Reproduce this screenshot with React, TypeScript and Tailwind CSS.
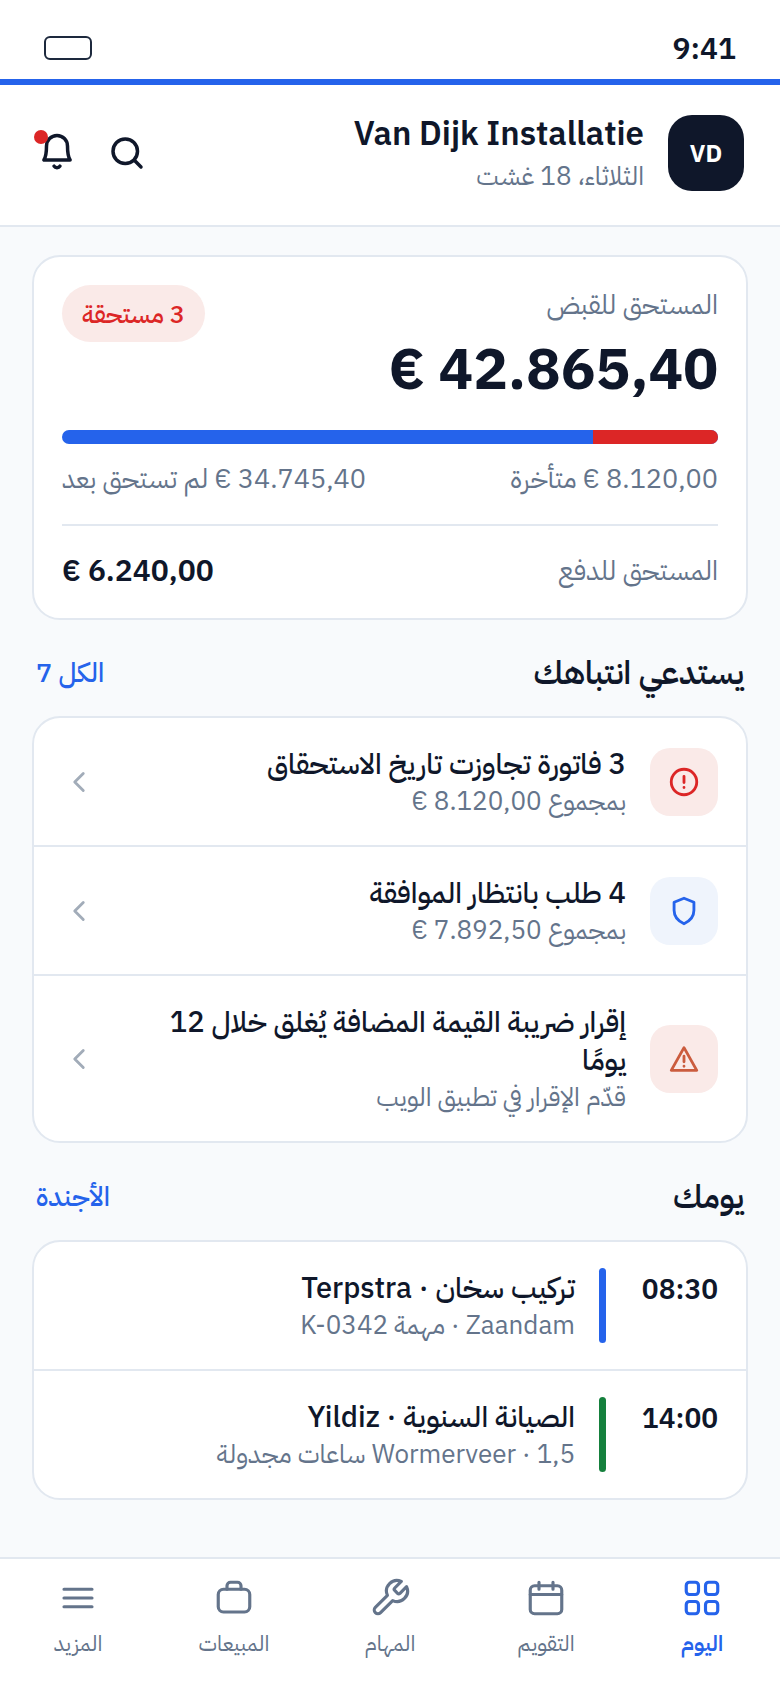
import { type ReactNode } from "react";

type IconProps = { className?: string; width?: number; children: ReactNode };

function Icon({ className = "", width = 2, children }: IconProps) {
    return (
        <svg
            viewBox="0 0 24 24"
            fill="none"
            stroke="currentColor"
            strokeWidth={width}
            strokeLinecap="round"
            strokeLinejoin="round"
            aria-hidden="true"
            className={`shrink-0 ${className}`}
        >
            {children}
        </svg>
    );
}

const alerts = [
    {
        title: "3 فاتورة تجاوزت تاريخ الاستحقاق",
        sub: "بمجموع 8.120,00 €",
        tile: "bg-[#faeae8] text-[#dc2626]",
        icon: (
            <>
                <circle cx="12" cy="12" r="9" />
                <path d="M12 8v4.4M12 15.8v.1" />
            </>
        ),
    },
    {
        title: "4 طلب بانتظار الموافقة",
        sub: "بمجموع 7.892,50 €",
        tile: "bg-[#eff4fc] text-[#2563eb]",
        icon: <path d="M12 3l7 2.8v5.7c0 4.5-2.8 7.6-7 9.5-4.2-1.9-7-5-7-9.5V5.8z" />,
    },
    {
        title: "إقرار ضريبة القيمة المضافة يُغلق خلال 12 يومًا",
        sub: "قدّم الإقرار في تطبيق الويب",
        tile: "bg-[#faeae8] text-[#cb5c3e]",
        icon: (
            <>
                <path d="M12 4l9 16H3z" />
                <path d="M12 10v4M12 17.1v.1" />
            </>
        ),
    },
];

const jobs = [
    {
        time: "08:30",
        title: "تركيب سخان · Terpstra",
        sub: "Zaandam · مهمة K-0342",
        bar: "bg-[#2563eb]",
    },
    {
        time: "14:00",
        title: "الصيانة السنوية · Yildiz",
        sub: "Wormerveer · 1,5 ساعات مجدولة",
        bar: "bg-[#15803d]",
    },
];

const tabs = [
    {
        label: "اليوم",
        active: true,
        icon: (
            <>
                <rect x="3" y="3" width="7" height="7" rx="1.8" />
                <rect x="14" y="3" width="7" height="7" rx="1.8" />
                <rect x="3" y="14" width="7" height="7" rx="1.8" />
                <rect x="14" y="14" width="7" height="7" rx="1.8" />
            </>
        ),
    },
    {
        label: "التقويم",
        icon: (
            <>
                <rect x="3" y="5" width="18" height="16" rx="2.5" />
                <path d="M3 10h18M8 3v4M16 3v4" />
            </>
        ),
    },
    {
        label: "المهام",
        icon: (
            <path d="M14.7 6.3a1 1 0 0 0 0 1.4l1.6 1.6a1 1 0 0 0 1.4 0l3.77-3.77a6 6 0 0 1-7.94 7.94l-6.91 6.91a2.12 2.12 0 0 1-3-3l6.91-6.91a6 6 0 0 1 7.94-7.94l-3.76 3.76z" />
        ),
    },
    {
        label: "المبيعات",
        icon: (
            <>
                <rect x="3" y="7" width="18" height="13" rx="3" />
                <path d="M8 7V5a2 2 0 0 1 2-2h4a2 2 0 0 1 2 2v2" />
            </>
        ),
    },
    {
        label: "المزيد",
        icon: <path d="M4 7h16M4 12h16M4 17h16" />,
    },
];

function SectionHead({ title, link }: { title: string; link: string }) {
    return (
        <div className="flex items-center justify-between px-1">
            <h2 className="text-[32px] leading-10 font-semibold">{title}</h2>
            <a href="#" className="text-[27px] leading-10 font-medium text-[#2563eb]">
                {link}
            </a>
        </div>
    );
}

export default function App() {
    return (
        <div
            dir="rtl"
            lang="ar"
            className="flex min-h-screen flex-col bg-slate-50 font-['IBM_Plex_Sans','IBM_Plex_Sans_Arabic','Noto_Sans',sans-serif] text-[#0f172a]"
        >
            <div className="flex items-center justify-between border-b-6 border-[#2563eb] bg-white px-11 pt-[30px] pb-[13px]">
                <span className="text-[30px] leading-9 font-semibold">9:41</span>
                <span className="h-6 w-12 rounded-md border-2 border-slate-800" />
            </div>

            <header className="flex items-center justify-between border-b-2 border-slate-200 bg-white px-9 pt-7 pb-8">
                <div className="flex items-center gap-6">
                    <span className="flex size-[76px] items-center justify-center rounded-3xl bg-[#0f172a] text-[24px] font-bold text-white">
                        VD
                    </span>
                    <div>
                        <h1 className="text-[33px] leading-10 font-semibold">Van Dijk Installatie</h1>
                        <p className="mt-1 text-[26px] leading-9 text-[#64748b]">الثلاثاء، 18 غشت</p>
                    </div>
                </div>
                <div className="flex gap-7">
                    <button type="button" aria-label="بحث">
                        <Icon className="size-[42px]">
                            <circle cx="11" cy="11" r="7" />
                            <path d="M16.2 16.2L20 20" />
                        </Icon>
                    </button>
                    <button type="button" aria-label="الإشعارات" className="relative">
                        <Icon className="size-[42px]">
                            <path d="M12 2a6 6 0 0 0-6 6c0 5-.5 6.5-1.5 8h15c-1-1.5-1.5-3-1.5-8a6 6 0 0 0-6-6z" />
                            <path d="M10.3 19.5a2 2 0 0 0 3.4 0" />
                        </Icon>
                        <span className="absolute -top-0.5 -left-0.5 size-3.5 rounded-full bg-[#dc2626]" />
                    </button>
                </div>
            </header>

            <main className="flex-1 px-8 pt-7 pb-12">
                <section className="rounded-[28px] border-2 border-slate-200 bg-white p-7">
                    <div className="flex items-start justify-between">
                        <div>
                            <p className="text-[27px] leading-[38px] text-[#64748b]">المستحق للقبض</p>
                            <p className="mt-2 text-[58px] leading-[74px] font-bold">42.865,40 €</p>
                        </div>
                        <span className="rounded-full bg-[#faeae8] px-5 py-2.5 text-[25px] leading-[37px] font-medium text-[#dc2626]">
                            3 مستحقة
                        </span>
                    </div>
                    <div className="mt-[25px] flex h-3.5 overflow-hidden rounded-full bg-[#2563eb]">
                        <span className="w-[19%] bg-[#dc2626]" />
                    </div>
                    <div className="mt-4 flex justify-between text-[27px] leading-9 text-[#64748b]">
                        <span>8.120,00 € متأخرة</span>
                        <span>34.745,40 € لم تستحق بعد</span>
                    </div>
                    <div className="mt-7 flex items-center justify-between border-t-2 border-slate-200 pt-6">
                        <span className="text-[27px] leading-10 text-[#64748b]">المستحق للدفع</span>
                        <span className="text-[30px] leading-10 font-semibold">6.240,00 €</span>
                    </div>
                </section>

                <section className="mt-8">
                    <SectionHead title="يستدعي انتباهك" link="الكل 7" />
                    <ul className="mt-6 divide-y-2 divide-slate-200 overflow-hidden rounded-[28px] border-2 border-slate-200 bg-white">
                        {alerts.map((a) => (
                            <li key={a.title}>
                                <a href="#" className="flex items-center gap-6 px-7 py-[26px]">
                                    <span
                                        className={`flex size-[68px] shrink-0 items-center justify-center rounded-[20px] ${a.tile}`}
                                    >
                                        <Icon className="size-[34px]">{a.icon}</Icon>
                                    </span>
                                    <span className="flex-1">
                                        <span className="block text-[29px] leading-[38px] font-medium">
                                            {a.title}
                                        </span>
                                        <span className="block text-[26px] leading-[37px] text-[#64748b]">
                                            {a.sub}
                                        </span>
                                    </span>
                                    <Icon className="size-[34px] text-[#a2acb9]">
                                        <path d="M15 6l-6 6 6 6" />
                                    </Icon>
                                </a>
                            </li>
                        ))}
                    </ul>
                </section>

                <section className="mt-[33px]">
                    <SectionHead title="يومك" link="الأجندة" />
                    <ul className="mt-6 divide-y-2 divide-slate-200 overflow-hidden rounded-[28px] border-2 border-slate-200 bg-white">
                        {jobs.map((j) => (
                            <li key={j.time} className="flex gap-6 px-7 py-[26px]">
                                <time className="w-[88px] text-[28px] leading-[42px] font-semibold">
                                    {j.time}
                                </time>
                                <span className={`w-[7px] rounded-full ${j.bar}`} />
                                <div className="flex-1">
                                    <p className="text-[29px] leading-[38px] font-medium">{j.title}</p>
                                    <p className="text-[26px] leading-[37px] text-[#64748b]">{j.sub}</p>
                                </div>
                            </li>
                        ))}
                    </ul>
                </section>
            </main>

            <nav className="grid grid-cols-5 border-t-2 border-slate-200 bg-white pt-[18px] pb-[27px]">
                {tabs.map((t) => (
                    <a
                        key={t.label}
                        href="#"
                        className={`flex flex-col items-center gap-1.5 text-[22px] leading-9 ${
                            t.active ? "font-semibold text-[#2563eb]" : "text-[#64748b]"
                        }`}
                    >
                        <Icon className="size-[42px]" width={1.8}>
                            {t.icon}
                        </Icon>
                        {t.label}
                    </a>
                ))}
            </nav>
        </div>
    );
}
